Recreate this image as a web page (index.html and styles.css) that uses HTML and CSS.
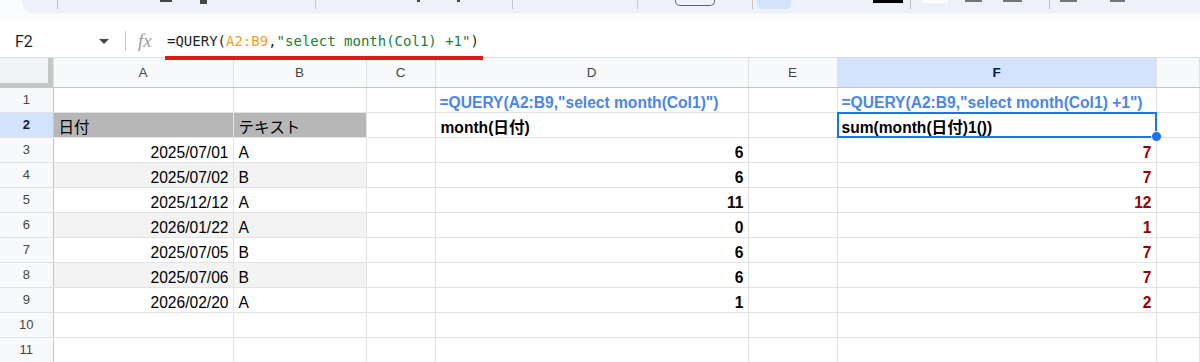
FILE: index.html
```html
<!DOCTYPE html>
<html lang="ja">
<head>
    <meta charset="UTF-8">
    <meta name="viewport" content="width=device-width, initial-scale=1.0">
    <title>QUERY month</title>
    <link rel="stylesheet" href="styles.css">
</head>
<body>
    <div class="toolbar-wrap">
        <div class="toolbar">
            <span class="tb-sep" style="margin-left:35px"></span>
            <span class="tb-mark dark" style="margin-left:102px;width:12px;height:2px"></span>
            <span class="tb-mark dark" style="margin-left:28px;width:7px;height:4px"></span>
            <span class="tb-sep" style="margin-left:108px"></span>
            <span class="tb-mark dark" style="margin-left:101px;width:3px;height:2px"></span>
            <span class="tb-mark dark" style="margin-left:37px;width:3px;height:2px"></span>
            <span class="tb-sep" style="margin-left:52px"></span>
            <span class="tb-sep" style="margin-left:124px"></span>
            <span class="tb-box" style="margin-left:37px"></span>
            <span class="tb-sep" style="margin-left:37px"></span>
            <span class="tb-active" style="margin-left:4px"></span>
            <span class="tb-mark black" style="margin-left:82px;width:30px;height:3px"></span>
            <span class="tb-sep" style="margin-left:7px"></span>
            <span class="tb-mark white" style="margin-left:11px;width:26px;height:3px"></span>
            <span class="tb-mark gray" style="margin-left:17px;width:17px;height:2px"></span>
            <span class="tb-mark gray" style="margin-left:21px;width:19px;height:2px"></span>
            <span class="tb-sep" style="margin-left:27px"></span>
            <span class="tb-mark gray" style="margin-left:10px;width:17px;height:2px"></span>
            <span class="tb-mark gray" style="margin-left:33px;width:15px;height:2px"></span>
        </div>
    </div>

    <div class="formula-bar">
        <div class="name-box">
            <span class="cell-name">F2</span>
            <span class="caret"></span>
        </div>
        <span class="fx">fx</span>
        <div class="formula"><span class="tok-plain">=QUERY(</span><span class="tok-ref">A2:B9</span><span class="tok-plain">,</span><span class="tok-str">"select month(Col1) +1"</span><span class="tok-plain">)</span></div>
        <div class="underline"></div>
    </div>

    <table class="grid">
        <colgroup>
            <col style="width:53px">
            <col style="width:180px">
            <col style="width:133px">
            <col style="width:69px">
            <col style="width:313px">
            <col style="width:89px">
            <col style="width:319px">
            <col>
        </colgroup>
        <tr class="col-heads">
            <th class="corner"></th>
            <th>A</th>
            <th>B</th>
            <th>C</th>
            <th>D</th>
            <th>E</th>
            <th class="active">F</th>
            <th></th>
        </tr>
        <tr>
            <th class="rh">1</th>
            <td></td><td></td><td></td>
            <td class="formula-text">=QUERY(A2:B9,"select month(Col1)")</td>
            <td></td>
            <td class="formula-text">=QUERY(A2:B9,"select month(Col1) +1")</td>
            <td></td>
        </tr>
        <tr>
            <th class="rh active">2</th>
            <td class="head-cell">日付</td>
            <td class="head-cell">テキスト</td>
            <td></td>
            <td class="bold">month(日付)</td>
            <td></td>
            <td class="bold selected">sum(month(日付)1())<span class="handle"></span></td>
            <td></td>
        </tr>
        <tr>
            <th class="rh">3</th>
            <td class="num">2025/07/01</td><td>A</td><td></td>
            <td class="num bold">6</td><td></td><td class="num bold red">7</td><td></td>
        </tr>
        <tr class="band">
            <th class="rh">4</th>
            <td class="num">2025/07/02</td><td>B</td><td></td>
            <td class="num bold">6</td><td></td><td class="num bold red">7</td><td></td>
        </tr>
        <tr>
            <th class="rh">5</th>
            <td class="num">2025/12/12</td><td>A</td><td></td>
            <td class="num bold">11</td><td></td><td class="num bold red">12</td><td></td>
        </tr>
        <tr class="band">
            <th class="rh">6</th>
            <td class="num">2026/01/22</td><td>A</td><td></td>
            <td class="num bold">0</td><td></td><td class="num bold red">1</td><td></td>
        </tr>
        <tr>
            <th class="rh">7</th>
            <td class="num">2025/07/05</td><td>B</td><td></td>
            <td class="num bold">6</td><td></td><td class="num bold red">7</td><td></td>
        </tr>
        <tr class="band">
            <th class="rh">8</th>
            <td class="num">2025/07/06</td><td>B</td><td></td>
            <td class="num bold">6</td><td></td><td class="num bold red">7</td><td></td>
        </tr>
        <tr>
            <th class="rh">9</th>
            <td class="num">2026/02/20</td><td>A</td><td></td>
            <td class="num bold">1</td><td></td><td class="num bold red">2</td><td></td>
        </tr>
        <tr>
            <th class="rh">10</th>
            <td></td><td></td><td></td><td></td><td></td><td></td><td></td>
        </tr>
        <tr>
            <th class="rh">11</th>
            <td></td><td></td><td></td><td></td><td></td><td></td><td></td>
        </tr>
    </table>
</body>
</html>
```

FILE: styles.css
```css
* {
    margin: 0;
    padding: 0;
    box-sizing: border-box;
}

body {
    background: #fff;
    width: 1200px;
    height: 362px;
    overflow: hidden;
    font-family: 'Liberation Sans', 'Noto Sans CJK JP', sans-serif;
    color: #000;
}

/* toolbar, mostly cut off at the top */
.toolbar-wrap {
    height: 25px;
    background: linear-gradient(#f9fbfd, #fbfcfe 60%, #fff);
}

.toolbar {
    margin-left: 22px;
    height: 13px;
    background: #edf2fa;
    border-bottom-left-radius: 14px;
    display: flex;
    align-items: flex-start;
    box-shadow: 0 1px 2px rgba(0,0,0,0.03);
}

.tb-sep {
    width: 1px;
    height: 9px;
    background: #c7c7c7;
}

.tb-mark.dark {
    background: #444746;
}

.tb-mark.black {
    background: #000;
}

.tb-mark.white {
    background: #fff;
}

.tb-mark.gray {
    background: #747775;
}

.tb-box {
    width: 40px;
    height: 6px;
    border: 1px solid #5f6368;
    border-top: none;
    border-radius: 0 0 5px 5px;
}

.tb-active {
    width: 34px;
    height: 9px;
    background: #d3e3fd;
    border-radius: 0 0 5px 5px;
}

/* formula bar */
.formula-bar {
    position: relative;
    height: 33px;
    display: flex;
    align-items: center;
    border-bottom: 1px solid #dadce0;
    background: #fff;
}

.name-box {
    width: 126px;
    height: 20px;
    display: flex;
    align-items: center;
    justify-content: space-between;
    padding: 0 16px 0 15px;
    border-right: 1px solid #c7c7c7;
}

.cell-name {
    font-family: Roboto, 'Liberation Sans', sans-serif;
    font-size: 16px;
    color: #1f1f1f;
}

.caret {
    width: 0;
    height: 0;
    border-left: 5px solid transparent;
    border-right: 5px solid transparent;
    border-top: 5px solid #444746;
}

.fx {
    margin-left: 12px;
    width: 29px;
    font-family: 'Liberation Serif', serif;
    font-style: italic;
    font-size: 19px;
    color: #9aa0a6;
}

.formula {
    font-family: 'DejaVu Sans Mono', 'Liberation Mono', monospace;
    font-size: 14px;
    letter-spacing: 0;
    white-space: pre;
}

.tok-plain {
    color: #1f1f1f;
}

.tok-ref {
    color: #f29b2f;
}

.tok-str {
    color: #188038;
}

.underline {
    position: absolute;
    left: 165px;
    top: 31px;
    width: 318px;
    height: 4px;
    background: #e0191b;
    z-index: 2;
}

/* sheet grid */
.grid {
    width: 1200px;
    table-layout: fixed;
    border-collapse: collapse;
    font-size: 15.6px;
}

.grid tr {
    height: 25px;
}

.grid td {
    border-right: 1px solid #e2e2e2;
    border-bottom: 1px solid #e2e2e2;
    padding: 0 4px 0 5px;
    line-height: 18px;
    vertical-align: bottom;
    white-space: nowrap;
}

.col-heads {
    height: 29px !important;
}

.col-heads th {
    background: #f8f9fa;
    border-right: 1px solid #e2e2e2;
    border-bottom: 1px solid #c4c7c5;
    font-weight: normal;
    font-size: 13.5px;
    color: #444746;
    text-align: center;
    vertical-align: middle;
}

.col-heads th.active {
    background: #d3e3fd;
    color: #041e49;
    font-weight: bold;
}

.col-heads th.corner {
    background: #f1f3f4;
    box-shadow: inset -5px 0 #c4c7c5, inset 0 -4px #c4c7c5;
}

.rh {
    background: #f8f9fa;
    border-right: 1px solid #c4c7c5;
    border-bottom: 1px solid #e2e2e2;
    font-weight: normal;
    font-size: 13px;
    color: #444746;
    text-align: center;
    vertical-align: middle;
}

.rh.active {
    background: #d3e3fd;
    color: #041e49;
    font-weight: bold;
}

.band td:nth-child(2),
.band td:nth-child(3) {
    background: #f3f3f3;
}

.head-cell {
    background: #b7b7b7;
}

.num {
    text-align: right;
}

.bold {
    font-weight: bold;
}

.red {
    color: #990000;
}

.formula-text {
    color: #4a86e8;
    font-weight: bold;
    padding-left: 4px !important;
}

.selected {
    position: relative;
    padding-left: 4px !important;
}

.selected::after {
    content: '';
    position: absolute;
    left: -1px;
    top: -1px;
    right: -1px;
    bottom: -1px;
    border: 2px solid #1a73e8;
}

.handle {
    position: absolute;
    right: -6px;
    bottom: -5px;
    width: 11px;
    height: 11px;
    border-radius: 50%;
    background: #1a73e8;
    border: 1px solid #fff;
    z-index: 1;
}
```
